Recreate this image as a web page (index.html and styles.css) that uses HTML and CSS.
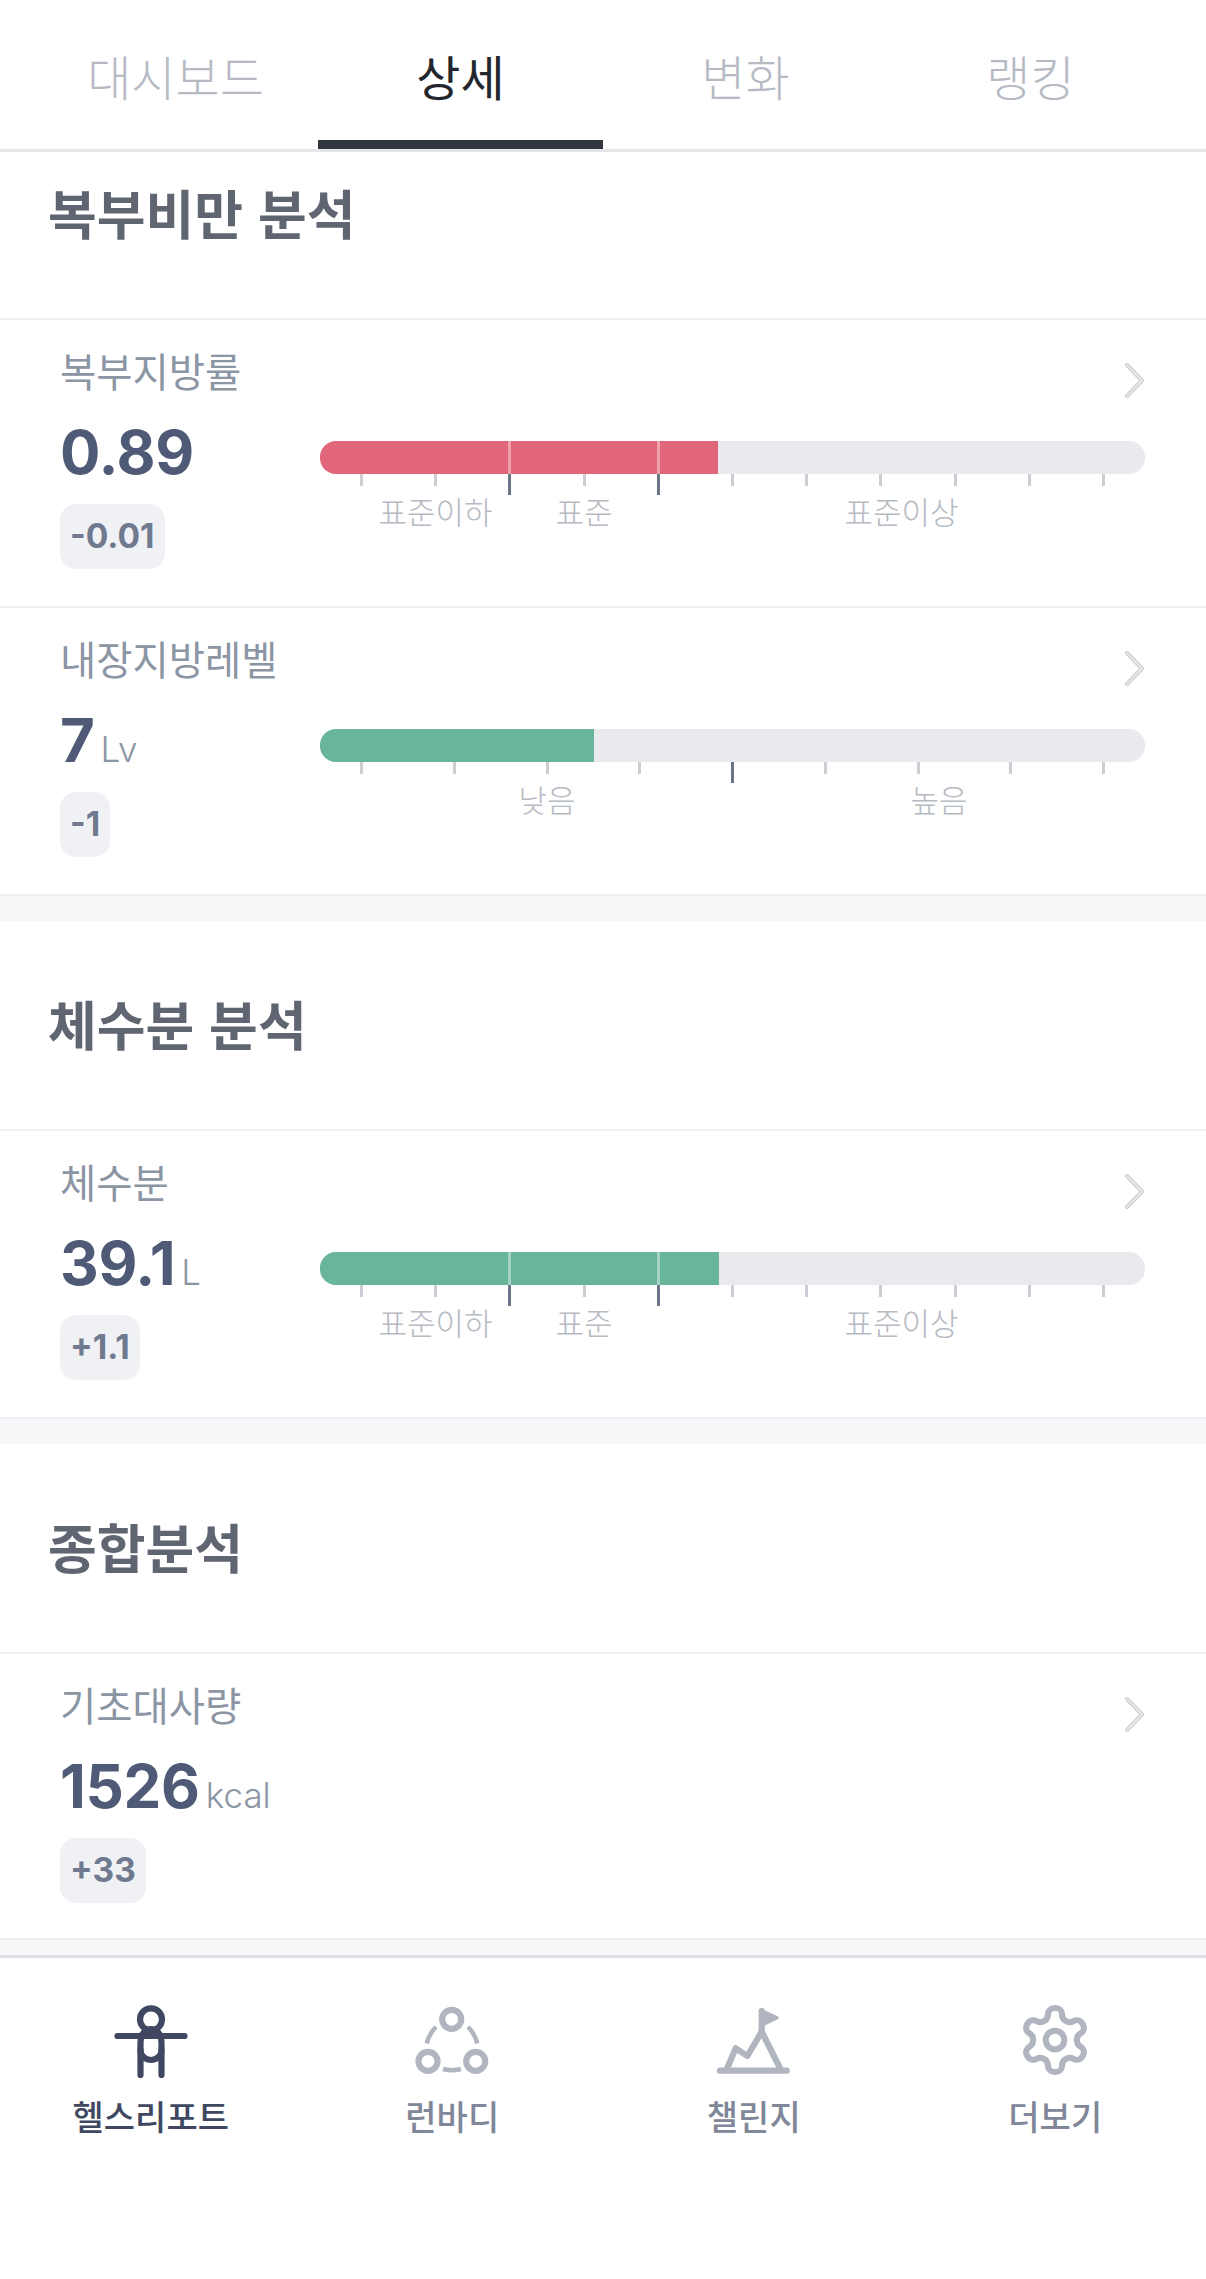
FILE: index.html
```html
<!DOCTYPE html>
<html lang="ko">
<head>
  <meta charset="UTF-8">
  <title>헬스리포트 상세</title>
  <link rel="stylesheet" href="styles.css">
</head>
<body>
<div class="app">

  <div class="tabs">
    <a class="tab">대시보드</a>
    <a class="tab active">상세</a>
    <a class="tab">변화</a>
    <a class="tab">랭킹</a>
  </div>

  <main class="content">

    <section class="section first">
      <h2 class="section-title">복부비만 분석</h2>

      <div class="row">
        <div class="metric">
          <div class="label">복부지방률</div>
          <div class="value"><b>0.89</b></div>
          <span class="chip">-0.01</span>
        </div>
        <div class="side">
          <svg class="chev" width="22" height="37" viewBox="0 0 22 37"><path class="chev-o" d="M3 3l15 15.5L3 34"/><path class="chev-i" d="M3 3l15 15.5L3 34"/></svg>
          <div class="gauge three">
            <div class="bar"><div class="fill red" style="width: 48.2%"></div></div>
            <div class="ticks">
              <i></i><i></i><i class="long"></i><i></i><i class="long"></i><i></i><i></i><i></i><i></i><i></i><i></i>
            </div>
            <div class="scale"><span>표준이하</span><span>표준</span><span>표준이상</span></div>
          </div>
        </div>
      </div>

      <div class="row">
        <div class="metric">
          <div class="label">내장지방레벨</div>
          <div class="value"><b>7</b><small>Lv</small></div>
          <span class="chip">-1</span>
        </div>
        <div class="side">
          <svg class="chev" width="22" height="37" viewBox="0 0 22 37"><path class="chev-o" d="M3 3l15 15.5L3 34"/><path class="chev-i" d="M3 3l15 15.5L3 34"/></svg>
          <div class="gauge two">
            <div class="bar"><div class="fill green" style="width: 33.2%"></div></div>
            <div class="ticks">
              <i></i><i></i><i></i><i></i><i class="long"></i><i></i><i></i><i></i><i></i>
            </div>
            <div class="scale"><span>낮음</span><span>높음</span></div>
          </div>
        </div>
      </div>
    </section>

    <section class="section">
      <h2 class="section-title">체수분 분석</h2>

      <div class="row">
        <div class="metric">
          <div class="label">체수분</div>
          <div class="value"><b>39.1</b><small>L</small></div>
          <span class="chip">+1.1</span>
        </div>
        <div class="side">
          <svg class="chev" width="22" height="37" viewBox="0 0 22 37"><path class="chev-o" d="M3 3l15 15.5L3 34"/><path class="chev-i" d="M3 3l15 15.5L3 34"/></svg>
          <div class="gauge three">
            <div class="bar"><div class="fill green" style="width: 48.4%"></div></div>
            <div class="ticks">
              <i></i><i></i><i class="long"></i><i></i><i class="long"></i><i></i><i></i><i></i><i></i><i></i><i></i>
            </div>
            <div class="scale"><span>표준이하</span><span>표준</span><span>표준이상</span></div>
          </div>
        </div>
      </div>
    </section>

    <section class="section">
      <h2 class="section-title">종합분석</h2>

      <div class="row">
        <div class="metric">
          <div class="label">기초대사량</div>
          <div class="value"><b>1526</b><small>kcal</small></div>
          <span class="chip">+33</span>
        </div>
        <div class="side">
          <svg class="chev" width="22" height="37" viewBox="0 0 22 37"><path class="chev-o" d="M3 3l15 15.5L3 34"/><path class="chev-i" d="M3 3l15 15.5L3 34"/></svg>
        </div>
      </div>
    </section>

  </main>

  <nav class="nav">
    <a class="nav-item active">
      <svg class="nav-icon" viewBox="0 0 80 80">
        <circle cx="40" cy="19.3" r="11"/>
        <path d="M6.5 36H73.5"/>
        <path d="M29.5 75V42a10.5 13 0 0 1 21 0V75"/>
        <path d="M29.5 50a10.5 10 0 0 0 21 0"/>
      </svg>
      <span>헬스리포트</span>
    </a>
    <a class="nav-item">
      <svg class="nav-icon" viewBox="0 0 80 80">
        <circle cx="39.7" cy="19.3" r="9.5"/>
        <circle cx="16" cy="61.3" r="9.5"/>
        <circle cx="63.7" cy="61.3" r="9.5"/>
        <path class="butt" d="M14.7 43.5Q17 34 24 26.7"/>
        <path class="butt" d="M56 26.7Q63 34 65.3 43.5"/>
        <path class="butt" d="M31 69Q40 71.5 49 69"/>
      </svg>
      <span>런바디</span>
    </a>
    <a class="nav-item">
      <svg class="nav-icon" viewBox="0 0 80 80">
        <path d="M6 70.7H72.7"/>
        <path d="M13.3 68L21.7 48.3 33.3 56 47.7 31.7 66 68"/>
        <path d="M47.7 31.7V11"/>
        <path class="solid" d="M47.5 11L62.5 17.8 47.5 25z"/>
      </svg>
      <span>챌린지</span>
    </a>
    <a class="nav-item">
      <svg class="nav-icon gear" viewBox="-0.5 -0.5 25 25">
        <path d="M12.22 2h-.44a2 2 0 0 0-2 2v.18a2 2 0 0 1-1 1.73l-.43.25a2 2 0 0 1-2 0l-.15-.08a2 2 0 0 0-2.73.73l-.22.38a2 2 0 0 0 .73 2.73l.15.1a2 2 0 0 1 1 1.72v.51a2 2 0 0 1-1 1.74l-.15.09a2 2 0 0 0-.73 2.73l.22.38a2 2 0 0 0 2.73.73l.15-.08a2 2 0 0 1 2 0l.43.25a2 2 0 0 1 1 1.73V20a2 2 0 0 0 2 2h.44a2 2 0 0 0 2-2v-.18a2 2 0 0 1 1-1.73l.43-.25a2 2 0 0 1 2 0l.15.08a2 2 0 0 0 2.73-.73l.22-.39a2 2 0 0 0-.73-2.73l-.15-.08a2 2 0 0 1-1-1.74v-.5a2 2 0 0 1 1-1.74l.15-.09a2 2 0 0 0 .73-2.73l-.22-.38a2 2 0 0 0-2.73-.73l-.15.08a2 2 0 0 1-2 0l-.43-.25a2 2 0 0 1-1-1.73V4a2 2 0 0 0-2-2z"/>
        <circle cx="12" cy="12" r="2.9"/>
      </svg>
      <span>더보기</span>
    </a>
  </nav>

</div>
</body>
</html>
```

FILE: styles.css
```css
* { box-sizing: border-box; }
html, body { margin: 0; padding: 0; background: white; }
body { font-family: Inter, "Noto Sans CJK KR", sans-serif; }

.app { width: 1206px; height: 2279px; display: flex; flex-direction: column; overflow: hidden; background: white; }

/* top tabs */
.tabs { flex: none; height: 152px; display: flex; padding: 0 33px; border-bottom: 3px solid #e5e6e9; }
.tab { flex: 1; height: 149px; padding-top: 43px; text-align: center;
  font-family: "Noto Sans CJK KR", sans-serif; font-size: 48px; line-height: 64px; font-weight: 300; color: #b6bac3; }
.tab.active { color: #23262d; font-weight: 400; border-bottom: 9px solid #32363f; }

/* sections */
.content { flex: 1; min-height: 0; overflow: hidden; background: #f6f7f9; }
.section { background: white; margin-bottom: 25px; }
.section:last-child { margin-bottom: 0; }
.section-title { height: 208px; margin: 0; padding: 67px 0 0 48px;
  font-family: "Noto Sans CJK KR", sans-serif; font-size: 53px; line-height: 70px; font-weight: 700; color: #5f6672; }
.section.first .section-title { height: 166px; padding-top: 25px; }

/* metric rows */
.row { height: 288px; display: flex; padding: 0 61px 0 60px; border-top: 2px solid #f0f1f4; }
.section .row:last-child { height: 290px; border-bottom: 2px solid #eeeff2; }
.section:last-child .row:last-child { height: 288px; }
.metric { flex: none; width: 260px; }
.label { margin-top: 22px; font-family: "Noto Sans CJK KR", sans-serif; font-size: 39.4px; line-height: 56px; font-weight: 400; color: #8c95a3; }
.value { margin-top: 16px; height: 76px; line-height: 76px; white-space: nowrap; color: #4f5b76; }
.value b { font-size: 60px; font-weight: 700; letter-spacing: -0.3px; }
.value small { margin-left: 6px; font-size: 35px; font-weight: 300; color: #8c95a3; }
.chip { display: inline-block; height: 65px; margin-top: 14px; padding: 0 10px; border-radius: 16px; background: #f0f1f5;
  font-size: 33.5px; line-height: 65px; font-weight: 700; color: #6f7a8e; }

.side { flex: 1; min-width: 0; display: flex; flex-direction: column; }
.chev { flex: none; align-self: flex-end; margin: 42px -1px 0 0; fill: none; stroke-linecap: round; stroke-linejoin: round; }
.chev-o { stroke: #cbcccf; stroke-width: 4; }
.chev-i { stroke: #e6e7e9; stroke-width: 2; }

/* gauge */
.gauge { margin-top: 42px; }
.bar { height: 33px; border-radius: 16px; overflow: hidden; background: #e9eaee; }
.fill { height: 100%; }
.fill.red { background: #e26679; }
.fill.green { background: #68b59a; }
.ticks { display: flex; justify-content: space-between; align-items: flex-start; height: 21px; padding: 0 40px; }
.ticks i { width: 3px; height: 12px; background: #cccdd2; position: relative; }
.ticks i.long { height: 21px; background: #6b7688; }
.three .ticks i.long::before { content: ""; position: absolute; left: 0; bottom: 100%; width: 3px; height: 33px; background: rgba(255, 255, 255, 0.4); }
.scale { display: flex; padding-left: 41px; margin-top: -4px; font-family: "Noto Sans CJK KR", sans-serif; font-size: 31px; line-height: 40px; font-weight: 300; color: #b6bac2; }
.scale span { text-align: center; }
.three .scale span:nth-child(1) { width: 149px; }
.three .scale span:nth-child(2) { width: 148px; }
.three .scale span:nth-child(3) { width: 487px; }
.two .scale span:nth-child(1) { width: 372px; }
.two .scale span:nth-child(2) { width: 412px; }

/* bottom nav */
.nav { flex: none; height: 324px; display: flex; border-top: 3px solid #dfe0e5; background: white; }
.nav-item { flex: 1; display: flex; flex-direction: column; align-items: center; padding-top: 42px;
  font-family: "Noto Sans CJK KR", sans-serif; font-size: 34px; line-height: 44px; font-weight: 500; color: #7f8798; }
.nav-item.active { color: #3f4860; }
.nav-item span { margin-top: 14px; }
.nav-icon { width: 80px; height: 80px; fill: none; stroke: #b0b5bf; stroke-width: 6.2; stroke-linecap: round; stroke-linejoin: round; }
.nav-item.active .nav-icon { stroke: #3f4860; }
.nav-icon .butt { stroke-linecap: butt; stroke-width: 4.5; }
.nav-icon .solid { fill: #b0b5bf; stroke-width: 4; }
.nav-icon.gear { stroke-width: 1.9; }
```
